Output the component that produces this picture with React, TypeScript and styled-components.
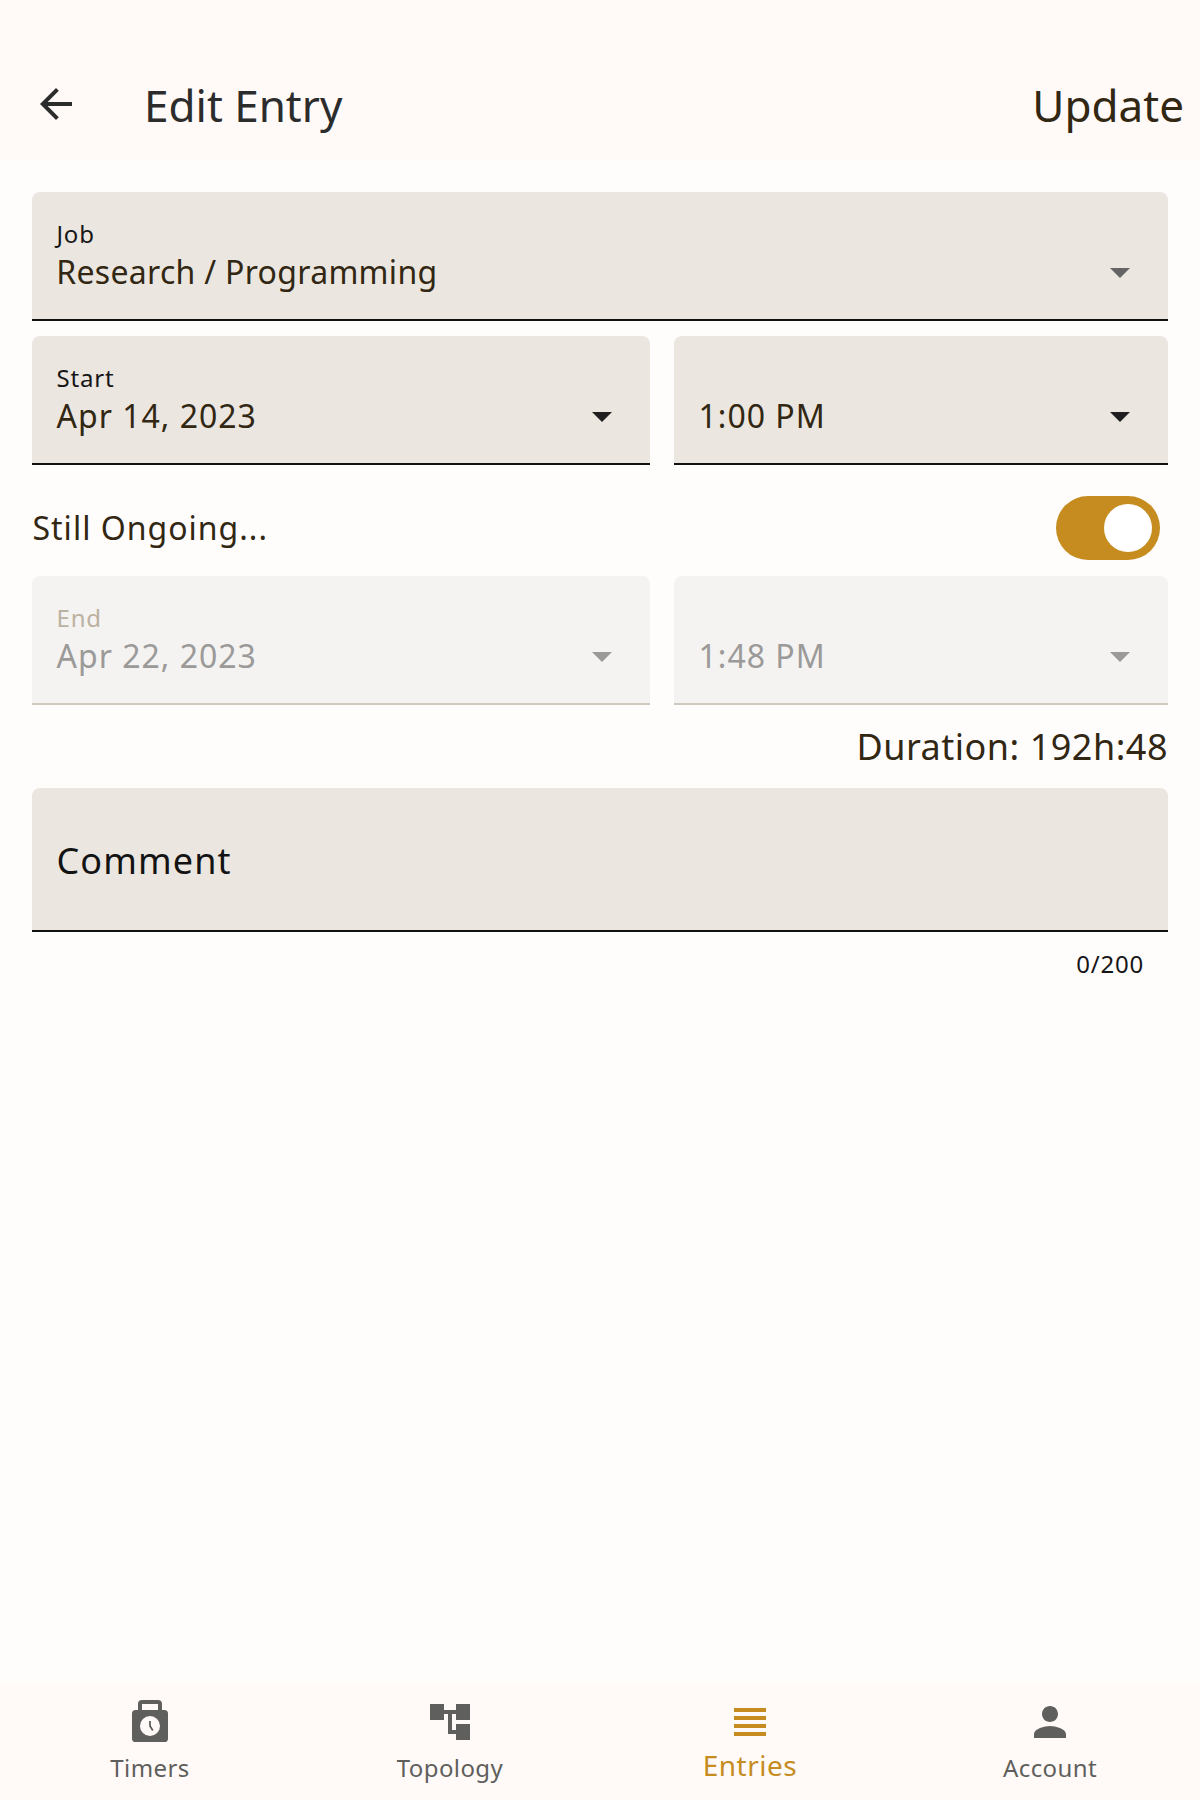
import React from "react";
import styled, { createGlobalStyle } from "styled-components";

const GlobalStyle = createGlobalStyle`
  * { box-sizing: border-box; }
  html, body { margin: 0; padding: 0; background: #fffdfc; }
  body { font-family: "Noto Sans", "Liberation Sans", sans-serif; color: #312713; }
`;

const Screen = styled.div`
  display: flex;
  flex-direction: column;
  width: 1200px;
  height: 1800px;
  background: #fffdfc;
`;

const Header = styled.header`
  display: flex;
  align-items: center;
  flex: none;
  height: 160px;
  padding: 48px 16px 0 32px;
  background: #fffaf7;
`;

const BackButton = styled.button`
  display: flex;
  width: 48px;
  height: 48px;
  margin-right: 64px;
  padding: 0;
  border: 0;
  background: none;
  color: #2c2c2c;
`;

const Title = styled.h1`
  flex: 1;
  margin: 0;
  padding-top: 2px;
  font-size: 44px;
  font-weight: 400;
  line-height: 60px;
  color: #2c2c2c;
`;

const UpdateButton = styled.button`
  padding: 2px 0 0;
  border: 0;
  background: none;
  font: inherit;
  font-size: 44px;
  line-height: 60px;
  color: #312713;
`;

const Form = styled.main`
  display: flex;
  flex-direction: column;
  flex: 1;
  padding: 32px 32px 0;
`;

const DateRow = styled.div`
  display: grid;
  grid-template-columns: 618px 494px;
  gap: 24px;
`;

const Field = styled.div<{ $disabled?: boolean }>`
  display: flex;
  align-items: flex-start;
  height: 129px;
  padding: 26px 24px 0;
  border-bottom: 2px solid ${(p) => (p.$disabled ? "#cfc9bf" : "#111111")};
  border-radius: 8px 8px 0 0;
  background: ${(p) => (p.$disabled ? "#f4f3f2" : "#ebe6df")};
`;

const FieldText = styled.div`
  flex: 1;
`;

const Label = styled.div<{ $disabled?: boolean }>`
  height: 32px;
  text-indent: 0.5px;
  font-size: 24px;
  line-height: 32px;
  letter-spacing: 0.8px;
  color: ${(p) => (p.$disabled ? "#bbb19f" : "#161616")};
`;

const Value = styled.div<{ $disabled?: boolean; $tight?: boolean }>`
  text-indent: ${(p) => (p.$tight ? "0.25px" : "0.5px")};
  font-size: 32px;
  line-height: 44px;
  letter-spacing: ${(p) => (p.$tight ? "0.3px" : "1px")};
  color: ${(p) => (p.$disabled ? "#9b9a98" : "#312713")};
`;

const Arrow = styled.svg`
  width: 48px;
  height: 48px;
  margin-top: 30px;
`;

const OngoingRow = styled.div`
  display: flex;
  align-items: center;
  justify-content: space-between;
  height: 64px;
  margin: 31px 0 16px;
  padding: 0 8px 0 0.5px;
  font-size: 32px;
  line-height: 44px;
  letter-spacing: 1px;
`;

const Toggle = styled.button`
  display: flex;
  align-items: center;
  justify-content: flex-end;
  width: 104px;
  height: 64px;
  padding: 0 8px;
  border: 0;
  border-radius: 32px;
  background: #c68c1f;
`;

const Thumb = styled.span`
  width: 48px;
  height: 48px;
  border-radius: 50%;
  background: #ffffff;
`;

const Duration = styled.div`
  height: 83px;
  padding-top: 17px;
  text-align: right;
  font-size: 36px;
  line-height: 50px;
  letter-spacing: 0.5px;
`;

const Comment = styled.div`
  display: flex;
  align-items: center;
  height: 144px;
  padding: 4px 24px 0 24.5px;
  border-bottom: 2px solid #111111;
  border-radius: 8px 8px 0 0;
  background: #ebe6df;
  color: #131313;
  font-size: 36px;
  line-height: 50px;
  letter-spacing: 1.1px;
`;

const Counter = styled.div`
  padding: 16px 24px 0;
  text-align: right;
  font-size: 24px;
  line-height: 32px;
  letter-spacing: 0.8px;
  color: #161616;
`;

const NavBar = styled.nav`
  display: grid;
  grid-template-columns: repeat(4, 1fr);
  flex: none;
  height: 116px;
  background: #fffaf7;
`;

const NavItem = styled.a<{ $active?: boolean }>`
  display: flex;
  flex-direction: column;
  align-items: center;
  padding-top: 14px;
  color: ${(p) => (p.$active ? "#c68c1f" : "#5f5f5d")};
  font-size: ${(p) => (p.$active ? "28px" : "24px")};
  line-height: 38px;
  letter-spacing: ${(p) => (p.$active ? "0.5px" : "0.4px")};
`;

const NavLabel = styled.span<{ $active?: boolean }>`
  margin-top: ${(p) => (p.$active ? "0" : "3px")};
`;

const Icon = styled.svg`
  display: block;
  flex: none;
  width: 48px;
  height: 48px;
`;

const DropArrow = ({ color }: { color: string }) => (
  <Arrow viewBox="0 0 24 24" fill={color}>
    <path d="M7 10l5 5 5-5z" />
  </Arrow>
);

type PickerProps = {
  label?: string;
  value: string;
  arrow: string;
  disabled?: boolean;
  tight?: boolean;
};

const Picker = ({ label, value, arrow, disabled, tight }: PickerProps) => (
  <Field $disabled={disabled}>
    <FieldText>
      <Label $disabled={disabled}>{label}</Label>
      <Value $disabled={disabled} $tight={tight}>{value}</Value>
    </FieldText>
    <DropArrow color={arrow} />
  </Field>
);

const Spaced = styled.div`
  margin-bottom: 15px;
`;

const tabs = [
  {
    name: "Timers",
    icon: (
      <>
        <path fillRule="evenodd" d="M8 1h8a2 2 0 0 1 2 2v3h1.200a1.800 1.800 0 0 1 1.800 1.800v12.400a1.800 1.800 0 0 1-1.800 1.800H4.800A1.800 1.800 0 0 1 3 20.200V7.800A1.800 1.800 0 0 1 4.800 6H6V3a2 2 0 0 1 2-2zM8 3v3h8V3zM12 9a5 5 0 1 0 0 10 5 5 0 0 0 0-10z" />
        <path d="M12 11.500V14l1.400 2.200" fill="none" stroke="currentColor" strokeWidth="0.900" />
      </>
    ),
  },
  { name: "Topology", icon: <path d="M22 11V3h-7v3H9V3H2v8h7V8h2v10h4v3h7v-8h-7v3h-2V8h2v3z" /> },
  { name: "Entries", icon: <path d="M4 15h16v-2H4v2zm0 4h16v-2H4v2zm0-8h16V9H4v2zm0-6v2h16V5H4z" />, active: true },
  {
    name: "Account",
    icon: (
      <path d="M12 12c2.210 0 4-1.790 4-4s-1.790-4-4-4-4 1.790-4 4 1.790 4 4 4zm0 2c-2.670 0-8 1.340-8 4v2h16v-2c0-2.660-5.330-4-8-4z" />
    ),
  },
];

export default function App() {
  return (
    <Screen>
      <GlobalStyle />
      <Header>
        <BackButton aria-label="Back">
          <Icon viewBox="0 0 24 24" fill="currentColor">
            <path d="M20 11H7.830l5.590-5.590L12 4l-8 8 8 8 1.410-1.410L7.830 13H20v-2z" />
          </Icon>
        </BackButton>
        <Title>Edit Entry</Title>
        <UpdateButton>Update</UpdateButton>
      </Header>
      <Form>
        <Spaced>
          <Picker label="Job" value="Research / Programming" arrow="#646464" tight />
        </Spaced>
        <DateRow>
          <Picker label="Start" value="Apr 14, 2023" arrow="#1f1f1f" />
          <Picker value="1:00 PM" arrow="#1f1f1f" />
        </DateRow>
        <OngoingRow>
          <span>Still Ongoing...</span>
          <Toggle role="switch" aria-checked="true">
            <Thumb />
          </Toggle>
        </OngoingRow>
        <DateRow>
          <Picker label="End" value="Apr 22, 2023" arrow="#9b9a98" disabled />
          <Picker value="1:48 PM" arrow="#9b9a98" disabled />
        </DateRow>
        <Duration>Duration: 192h:48</Duration>
        <Comment>Comment</Comment>
        <Counter>0/200</Counter>
      </Form>
      <NavBar>
        {tabs.map((t) => (
          <NavItem key={t.name} $active={t.active}>
            <Icon viewBox="0 0 24 24" fill="currentColor">{t.icon}</Icon>
            <NavLabel $active={t.active}>{t.name}</NavLabel>
          </NavItem>
        ))}
      </NavBar>
    </Screen>
  );
}
